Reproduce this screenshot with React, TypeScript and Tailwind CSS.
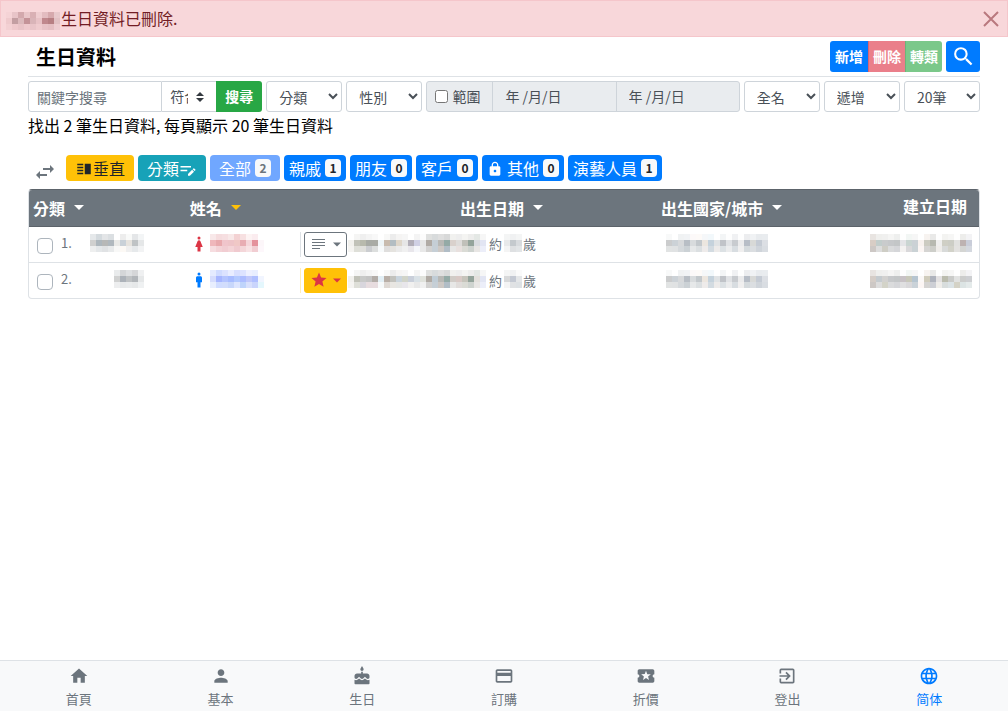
import React, { useState } from 'react';
import clsx from 'clsx';
import {
  MdCake,
  MdCreditCard,
  MdExitToApp,
  MdHome,
  MdLanguage,
  MdLocalActivity,
  MdLock,
  MdMan,
  MdPerson,
  MdSearch,
  MdStar,
  MdSwapHoriz,
  MdVerticalSplit,
  MdWoman,
} from 'react-icons/md';

interface Person {
  id: number;
  category: string[];
  gender: 'female' | 'male';
  name: string[];
  starred: boolean;
  birthday: string[];
  age: string[];
  city: string[];
  created: string[];
}

// Private values are masked: one string per row, one colour per 6px cell
const maskedUser = [
  'f5d3d6 e8c4c8 d3a9ad e9c6c9 d9b0b4 efcdd0 e3bcc0 d6a9ad e8c9cc',
  'efcacd c39ea2 dcb9bc c49398 d9b4b8 e8c2c6 c0888d b77f83 e2c1c4',
  'f3d0d3 efc8cc e9c3c7 efc9cd e9c4c8 efcbce e8c2c6 e5bec2 eecdd1',
];

const cityMask = [
  'f8f9f9 ffffff f0f2f3 f1f3f5 fcf9f9 fdfaf8 f5f7f9 f2f8fb ffffff f3f5f6 fefefe f0f1f3 fefefe ecedef f0f2f4 e8ebee e9ecef',
  'cbcccd ccd2d7 d7d9db b8bec5 d8dbdd c3c8cc ece6df c5d2dc e0e3e5 c0c3c8 e0e2e5 c8cbcf ebebec b7bdc6 d8d9d7 c5cbd4 dcdfe4',
  'e1e3e3 e0e2e3 d5d9dc cbd1d5 e6e8e9 dbdfe1 eeebea d3dbe1 edebea dce1e4 ebeced d8dde1 f0efef d5dadd dbdee1 cfd4da d9dde2',
];

const people: Person[] = [
  {
    id: 1,
    category: [
      'e5e8ea d4dade e3e5e7 dbdfe2 ffffff ededed f9faf9 e4e6e8 f3f5f6',
      'd0d0cf aeb7bd b7b8b7 b0b8be e9e9e7 c9d1d8 e6e3de bfc3c5 e5e7e8',
      'eeefef e4e7e9 e0e2e4 e8eaeb f8f8f7 fcf9f5 efefef e6e9eb f2f3f4',
    ],
    gender: 'female',
    name: [
      'f8e8e9 f5dcde f6dfe1 f8e8e8 f3d2d3 f7e0e1 fdf3f3 fbecef ffffff',
      'efb7bb e8a9ad f0c5cb eec4c8 f0c8c6 e8adb3 f5d6da e4929c fcf6f9',
      'f6dde0 f3d2d6 f1cdd2 f4d4d7 f0cacf f4d6d9 f8e2e4 f1cdd2 fdf7fb',
    ],
    starred: false,
    birthday: [
      'ffffff f5f5f4 efefef f4f4f4 f8f8f8 ffffff f8f8f7 ececec f5f4f3 f6f6f6 ffffff f4f4f4 fcfcfc dfe0df d8dbdc dfdfdf d8d9d9 f1f1ef eeeeee f4f4f2 ededec e4e8e5 f6f6f6',
      'f2f1ed c1c2b8 b8baad a8aba5 a9aba5 eef5f7 c8bbae b3bdc2 ded6c9 e6e6e6 b2aeb8 d0d0e4 e6e6e6 b0aaa4 c5ced5 b8b8b5 94aaa6 d9d1cc dedcda c0c0b9 94a49b d9dce0 e2e5f3',
      'f5f4f1 dedfd8 e0e0dc cbcdd0 dcdedd f7fafb dfdedd e5e3df eaeaea f0f0f0 e8e6eb f5f6fa e8e8e8 d2d1d0 c6cfd6 cdc8c4 b1bdc6 e7e7e6 e8e0de dadbd5 ced3cf e8e6e4 eceef9',
    ],
    age: ['f4f5f5 f0f1f2 f4f5f5', 'e8e9ea c4c9cd d8dbde', 'f4f4f4 dee0e2 e2e5e7'],
    city: cityMask,
    created: [
      'e8e4e1 efefed f0f0ef f5f5f4 eeefee fefefe f2f6f4 f6f6f6 ffffff f7f3f0 e9e9e8 fefefe f3f3f1 f6f6f5 fefefe ededeb f3f3f5',
      'd8cdc5 c2cdcb c9cbcc c6c8ca c3c6c7 e4e4e7 cad5d2 cbd1d5 f8f2ef cccbc1 b7b9b0 efefee cfcfc5 cccdc5 e1e1df bdb2b1 c9cdd9',
      'cdc8c5 dddddd cecdc5 dadbdc d5d6d9 f4f2f1 d9d8da cad2d5 fcf6f4 d5d4d2 cdcec9 efedea d8dad9 d2d2c9 e3e2e0 d4d5d3 d4d8df',
    ],
  },
  {
    id: 2,
    category: ['e9ebec d4d6d8 dee0e2 d5d6d8 eff0f1', 'd0d1d1 acb2b9 bfc2c4 b2b6ba e5e7e8', 'edeeef e7e9ea e9ebec e6e8e9 eff1f2'],
    gender: 'male',
    name: [
      'e5ebff d0dbff dce2ff e9edff d8dfff dde3ff edf0ff e8eeff ffffff',
      'd5dcfd a7b6ff b4c4ff a8bcff b3c9ff adbdff c0c8fb b0c0ff f1f5ff',
      'e8eefe d0dcff d2ddfc c8d7fb dde5fe bfd4fb d8e0fc cad5fc e4f7fd',
    ],
    starred: true,
    birthday: [
      'ffffff f5f5f4 efefef f4f4f4 f8f8f8 ffffff f8f8f7 ececec f5f4f3 f6f6f6 ffffff f4f4f4 fcfcfc dfe0df d8dbdc dfdfdf d8d9d9 f1f1ef eeeeee f4f4f2 ededec e4e8e5 f6f6f6',
      'f2f1ed c1c2b8 c8c9c8 c4c4c4 b3ada8 e3eff5 b9afa7 c2c2bd c9d4dd d1d4c9 c9cfda d9e1e6 e0e2dc b0aaa4 c0ccd5 b8b8b5 94aaa6 d1ccc7 d8c9c5 c6c4bb 94a49b e3e0dc e2e5f3',
      'f5f4f1 dedfd8 d8d6dd e7dcdf e7dcdf f7fafb dfd9d4 e8e6e2 e5e6e4 e8e6eb f1f0ef e8e8e8 f0f0f0 d2d1d0 c6cfd6 cdc8c4 b1bdc6 e7e7e6 e0dcda dadbd5 ced3cf e8e6e4 eceef9',
    ],
    age: ['f4f5f5 f0f1f2 fafafa', 'd8d9da c4c9d3 e4e6e8', 'f4f4f4 e0e2e4 dde1e4'],
    city: cityMask,
    created: [
      'e8e4e1 efefed f0f0ef f5f5f4 eeefee fefefe f2f6f4 f6f6f6 ffffff f7f3f0 e9e9e8 fefefe f3f3f1 f6f6f5 fefefe ededeb f3f3f5',
      'd5cdc7 c5cbcf d2d1cf c6c8ca c3c6c7 c8c2c6 c8c8ba b6c5d0 fbf8f7 d0ccbc afb3bd e3e1e2 bbbcae cacbc9 e1e2e1 cccdcc cdcfd2',
      'cdc8c5 dddddd d3d3c8 dadbdc d5d6d9 dfdfe0 d9d8da cad2d8 fcf6f4 d5d4d2 cdcfd5 efedea d8dddd dbe3e6 d4d2c6 dce4e4 e4eaea',
    ],
  },
];

const tags = [
  { label: '親戚', count: 1 },
  { label: '朋友', count: 0 },
  { label: '客戶', count: 0 },
  { label: '其他', count: 0, locked: true },
  { label: '演藝人員', count: 1 },
];

const navItems = [
  { label: '首頁', icon: MdHome },
  { label: '基本', icon: MdPerson },
  { label: '生日', icon: MdCake },
  { label: '訂購', icon: MdCreditCard },
  { label: '折價', icon: MdLocalActivity },
  { label: '登出', icon: MdExitToApp },
  { label: '简体', icon: MdLanguage, active: true },
];

const Mask: React.FC<{ rows: string[]; className?: string }> = ({ rows, className }) => {
  const cells = rows.map((row) => row.split(' '));
  const width = cells[0].length * 6;

  return (
    <svg
      width={width}
      height={18}
      viewBox={`0 0 ${width} 18`}
      shapeRendering="crispEdges"
      aria-hidden="true"
      className={clsx('shrink-0', className)}
    >
      {cells.map((row, y) =>
        row.map((color, x) => (
          <rect key={`${x}-${y}`} x={x * 6} y={y * 6} width={6} height={6} fill={`#${color}`} />
        ))
      )}
    </svg>
  );
};

const Caret: React.FC<{ className?: string }> = ({ className }) => (
  <svg width="10" height="5" viewBox="0 0 10 5" aria-hidden="true" className={clsx('inline-block shrink-0', className)}>
    <path d="M0 0h10L5 5z" fill="currentColor" />
  </svg>
);

const FilterSelect: React.FC<{ label: string; option: string }> = ({ label, option }) => (
  <select
    aria-label={label}
    className="h-[31px] min-w-0 flex-[76_1_76px] rounded-[3px] border border-[#ced4da] bg-white px-2 text-sm text-[#495057]"
  >
    <option>{option}</option>
  </select>
);

const Badge: React.FC<{ count: number; muted?: boolean }> = ({ count, muted }) => (
  <span
    className={clsx(
      'flex h-[18px] w-4 items-center justify-center rounded bg-[#f8f9fa] text-xs font-bold',
      muted ? 'text-[#6c757d]' : 'text-[#212529]'
    )}
  >
    {count}
  </span>
);

const SortHeader: React.FC<{ label: string; active?: boolean }> = ({ label, active }) => (
  <button className="inline-flex items-center gap-[9px] font-bold">
    {label}
    <Caret className={active ? 'text-[#ffc107]' : 'text-white'} />
  </button>
);

const Toolbar: React.FC = () => (
  <form className="mt-1 flex gap-1" onSubmit={(e) => e.preventDefault()}>
    <div className="flex min-w-0 flex-[234_1_234px]">
      <input
        type="text"
        aria-label="關鍵字搜尋"
        placeholder="關鍵字搜尋"
        className="h-[31px] w-0 min-w-0 flex-1 rounded-l-[3px] border border-[#ced4da] px-2 text-sm text-[#495057] placeholder:text-[#6c757d]"
      />
      <div className="relative">
        <select
          aria-label="比對方式"
          className="h-[31px] w-[54px] appearance-none border-y border-[#ced4da] bg-white pb-px pl-2 pr-7 text-sm text-[#495057]"
        >
          <option>符合</option>
        </select>
        <svg width="8" height="10" viewBox="0 0 8 10" className="pointer-events-none absolute right-3 top-[11px]">
          <path d="M4 0l4 4H0zM4 10L0 6h8z" fill="#343a40" />
        </svg>
      </div>
      <button className="h-[31px] w-[46px] rounded-r-[3px] bg-[#28a745] pb-px text-sm font-bold text-white">搜尋</button>
    </div>
    <FilterSelect label="分類" option="分類" />
    <FilterSelect label="性別" option="性別" />
    <div className="flex h-[31px] min-w-0 flex-[313_1_313px] rounded-[3px] border border-[#ced4da] bg-[#e9ecef] text-sm text-[#495057]">
      <label className="flex w-[66px] shrink-0 items-center gap-1 border-r border-[#ced4da] pb-px pl-2">
        <input type="checkbox" className="size-[13px]" />
        範圍
      </label>
      <input
        type="text"
        aria-label="開始日期"
        disabled
        value="年 /月/日"
        className="w-0 min-w-0 flex-1 border-r border-[#ced4da] px-3 pb-px"
      />
      <input type="text" aria-label="結束日期" disabled value="年 /月/日" className="w-0 min-w-0 flex-1 px-3 pb-px" />
    </div>
    <FilterSelect label="搜尋欄位" option="全名" />
    <FilterSelect label="排序" option="遞增" />
    <FilterSelect label="每頁筆數" option="20筆" />
  </form>
);

const TagBar: React.FC = () => (
  <div className="mt-[18px] flex items-end gap-1">
    <button aria-label="切換" className="-mb-[3px] ml-[5px] mr-[5px] text-[#6c757d]">
      <MdSwapHoriz size={24} />
    </button>
    <button className="flex h-[26px] items-center rounded bg-[#ffc107] px-[9px] text-[#212529]">
      <MdVerticalSplit size={18} className="translate-y-px" />
      垂直
    </button>
    <button className="flex h-[26px] items-center rounded bg-[#17a2b8] px-[9px] text-white">
      分類
      <svg width="18" height="18" viewBox="0 0 24 24" fill="currentColor" aria-hidden="true" className="translate-y-px">
        <path d="M2 8h14v2H2zM2 13h9v2H2zM12 18.500V21h2.500l5.500-5.500-2.500-2.500zM21.800 13.700a.7.7 0 0 0 0-1l-1.500-1.500a.7.7 0 0 0-1 0l-1.100 1.100 2.500 2.500z" />
      </svg>
    </button>
    <button disabled className="flex h-[26px] items-center gap-1 rounded bg-[#70a7ff] px-[9px] text-white">
      全部
      <Badge count={2} muted />
    </button>
    {tags.map((tag) => (
      <button key={tag.label} className="flex h-[26px] items-center gap-1 rounded bg-[#007bff] px-[5px] text-white">
        {tag.locked && <MdLock size={16} className="translate-y-px" />}
        {tag.label}
        <Badge count={tag.count} />
      </button>
    ))}
  </div>
);

const PersonRow: React.FC<{ person: Person }> = ({ person }) => {
  const female = person.gender === 'female';

  return (
    <tr className="h-9 border-t border-[#dee2e6] first:border-t-0">
      <td className="pl-2">
        <div className="flex items-center">
          <input
            type="checkbox"
            aria-label={`選取第 ${person.id} 筆`}
            className="mt-[3px] size-4 appearance-none rounded border border-[#adb5bd] bg-white"
          />
          <span className="mb-[3px] ml-2">{person.id}.</span>
          <Mask rows={person.category} className="mb-[3px] ml-auto mr-[42px]" />
        </div>
      </td>
      <td className="pl-1">
        <a href="#" className="flex items-center gap-[2px]">
          {female ? <MdWoman size={18} className="text-[#dc3545]" /> : <MdMan size={18} className="text-[#007bff]" />}
          <Mask rows={person.name} className="mb-[3px]" />
        </a>
      </td>
      <td>
        <div className="flex items-center pl-[5px]">
          <span className={clsx('mr-[3px] h-[25px] w-px', person.starred ? 'bg-[#ffeeba]' : 'bg-[#dee2e6]')} />
          <button
            aria-label="標記"
            className={clsx(
              'flex h-[25px] w-[43px] items-center justify-between rounded-[3px] border px-[5px]',
              person.starred ? 'border-[#ffc107] bg-[#ffc107] text-[#dc3545]' : 'border-[#6c757d] text-[#6c757d]'
            )}
          >
            {person.starred ? (
              <MdStar size={18} />
            ) : (
              <svg width="18" height="10" viewBox="0 0 18 10" stroke="currentColor" aria-hidden="true">
                <path d="M2 .5h13M2 3.5h13M2 6.5h13M2 9.5h8" />
              </svg>
            )}
            <Caret className="w-2" />
          </button>
          <Mask rows={person.birthday} className="mb-[3px] ml-px" />
          <span className="ml-[3px]">約</span>
          <Mask rows={person.age} className="mb-[3px] ml-[2px]" />
          <span className="ml-px">歲</span>
        </div>
      </td>
      <td className="pl-2.5">
        <Mask rows={person.city} className="mb-[3px]" />
      </td>
      <td className="pr-[7px]">
        <Mask rows={person.created} className="mb-[3px] ml-auto" />
      </td>
    </tr>
  );
};

export default function App() {
  const [showAlert, setShowAlert] = useState(true);

  return (
    <div className="flex min-h-screen flex-col bg-white font-['Noto_Sans_CJK_TC','Noto_Sans',sans-serif] text-base text-black">
      {showAlert && (
        <div role="alert" className="flex h-[37px] items-center border border-[#f5c6cb] bg-[#f8d7da] pl-[5px] pr-2 text-[#721c24]">
          <Mask rows={maskedUser} className="mt-1" />
          <span className="ml-px pb-0.5">生日資料已刪除.</span>
          <button aria-label="關閉" className="ml-auto" onClick={() => setShowAlert(false)}>
            <svg width="16" height="16" viewBox="0 0 16 16" stroke="#b9787e" strokeWidth="2" aria-hidden="true">
              <path d="M1 1l14 14M15 1L1 15" />
            </svg>
          </button>
        </div>
      )}

      <main className="flex-1 px-7">
        <header className="flex h-10 items-center border-b border-[#dee2e6] pl-2">
          <h1 className="text-xl font-bold">生日資料</h1>
          <div className="ml-auto flex text-sm font-bold text-white">
            <button className="h-[31px] w-[38px] rounded-l-[3px] bg-[#007bff] pb-0.5">新增</button>
            <button disabled className="h-[31px] w-[37px] border-l border-[#dc6470] bg-[#ea7f8a] pb-0.5">
              刪除
            </button>
            <button disabled className="h-[31px] w-[37px] rounded-r-[3px] border-l border-[#6bb57a] bg-[#7bc88a] pb-0.5">
              轉類
            </button>
          </div>
          <button aria-label="搜尋" className="ml-1 flex h-[31px] w-[34px] items-center justify-center rounded-[3px] bg-[#007bff] text-white">
            <MdSearch size={25} />
          </button>
        </header>

        <Toolbar />
        <p className="mt-px leading-6">找出 2 筆生日資料, 每頁顯示 20 筆生日資料</p>
        <TagBar />

        <div className="mt-2 overflow-hidden rounded-[4px] border border-[#dee2e6] border-t-[#5c636a]">
          <table className="w-full table-fixed text-[13px] text-[#6c757d]">
            <colgroup>
              <col className="w-[16.5%]" />
              <col className="w-[11.5%]" />
              <col className="w-[38%]" />
              <col className="w-[20%]" />
              <col className="w-[14%]" />
            </colgroup>
            <thead>
              <tr className="h-9 border-b border-[#5c636a] bg-[#6c757d] text-left text-base text-white">
                <th className="pl-1">
                  <SortHeader label="分類" />
                </th>
                <th className="pl-1">
                  <SortHeader label="姓名" active />
                </th>
                <th className="pl-[165px]">
                  <SortHeader label="出生日期" />
                </th>
                <th className="pl-[5px]">
                  <SortHeader label="出生國家/城市" />
                </th>
                <th className="pb-1 pr-3 text-right">建立日期</th>
              </tr>
            </thead>
            <tbody>
              {people.map((person) => (
                <PersonRow key={person.id} person={person} />
              ))}
            </tbody>
          </table>
        </div>
      </main>

      <nav className="flex h-[51px] border-t border-[#dee2e6] bg-[#f8f9fa] px-2 text-[13px]">
        {navItems.map(({ label, icon: Icon, active }) => (
          <a
            key={label}
            href="#"
            className={clsx('flex flex-1 flex-col items-center pt-[5px]', active ? 'text-[#007bff]' : 'text-[#6c757d]')}
          >
            <Icon size={24} />
            <span className="mt-px leading-6">{label}</span>
          </a>
        ))}
      </nav>
    </div>
  );
}
